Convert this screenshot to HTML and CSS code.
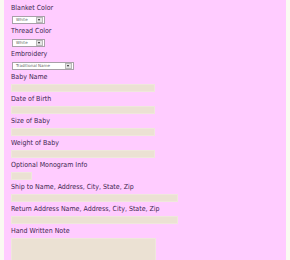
FILE: index.html
```html
<!DOCTYPE html>
<html>
<head>
<meta charset="utf-8">
<link rel="stylesheet" href="styles.css">
</head>
<body>
<div class="page">
  <form class="form">
    <div class="label">Blanket Color</div>
    <div class="select sm"><span class="sel-text">White</span><span class="arrow"></span></div>
    <div class="label">Thread Color</div>
    <div class="select sm"><span class="sel-text">White</span><span class="arrow"></span></div>
    <div class="label">Embroidery</div>
    <div class="select lg"><span class="sel-text">Traditional Name</span><span class="arrow"></span></div>
    <div class="label">Baby Name</div>
    <div class="input"></div>
    <div class="label">Date of Birth</div>
    <div class="input"></div>
    <div class="label">Size of Baby</div>
    <div class="input"></div>
    <div class="label">Weight of Baby</div>
    <div class="input"></div>
    <div class="label">Optional Monogram Info</div>
    <div class="input tiny"></div>
    <div class="label">Ship to Name, Address, City, State, Zip</div>
    <div class="input wide"></div>
    <div class="label">Return Address Name, Address, City, State, Zip</div>
    <div class="input wide"></div>
    <div class="label">Hand Written Note</div>
    <div class="textarea"></div>
  </form>
</div>
</body>
</html>
```
FILE: styles.css
```css
html, body {
  margin: 0;
  padding: 0;
}
body {
  background: #fafaf2;
  height: 260px;
  overflow: hidden;
}
.page {
  margin: 0 4px;
  background: #ffccff;
  height: 100%;
  padding: 1px 0 0 7px;
  box-sizing: border-box;
}
.form {
  display: flex;
  flex-direction: column;
  align-items: flex-start;
}
.label {
  font-family: "DejaVu Sans Condensed", "DejaVu Sans", sans-serif;
  font-size: 7px;
  color: #40264f;
  height: 14px;
  line-height: 14px;
  white-space: nowrap;
}
.select {
  margin-top: 1px;
  margin-left: 1px;
  height: 8px;
  box-sizing: border-box;
  background: #fff;
  border: 1px solid #a8a0a8;
  display: flex;
  align-items: center;
  justify-content: space-between;
}
.select.sm { width: 33px; }
.select.lg { width: 62px; }
.sel-text {
  font-family: "DejaVu Sans", sans-serif;
  font-size: 4px;
  color: #666;
  padding-left: 3px;
  line-height: 6px;
}
.arrow {
  width: 7px;
  height: 6px;
  box-sizing: border-box;
  background: #e4e4e4;
  border: 1px solid #b8b8b8;
  margin-right: 1px;
  position: relative;
}
.arrow::after {
  content: "";
  position: absolute;
  left: 1px;
  top: 1px;
  border-left: 1.5px solid transparent;
  border-right: 1.5px solid transparent;
  border-top: 2px solid #222;
}
.input {
  width: 144px;
  height: 8px;
  box-sizing: border-box;
  background: #ebe1d3;
  border: 1px solid #efe7dc;
}
.input.tiny { width: 21px; }
.input.wide { width: 167px; }
.textarea {
  width: 145px;
  height: 22px;
  box-sizing: border-box;
  background: #ebe1d3;
  border: 1px solid #efe7dc;
  border-bottom: 0;
}
```
